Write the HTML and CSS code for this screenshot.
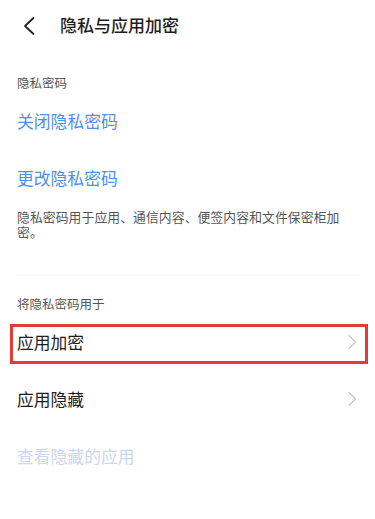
FILE: index.html
```html
<!DOCTYPE html>
<html lang="zh-CN">
<head>
<meta charset="UTF-8">
<meta name="viewport" content="width=device-width, initial-scale=1.0">
<title>隐私与应用加密</title>
<link rel="stylesheet" href="styles.css">
</head>
<body>
<div class="page">
    <div class="header">
        <svg class="back" width="14" height="20" viewBox="0 0 14 20">
            <path d="M11.5 2 L3 10 L11.5 18" fill="none" stroke="#222" stroke-width="1.8" stroke-linecap="round" stroke-linejoin="round"/>
        </svg>
        <div class="header-title">隐私与应用加密</div>
    </div>

    <div class="group-title first">隐私密码</div>
    <div class="row link">关闭隐私密码</div>
    <div class="row link">更改隐私密码</div>
    <div class="desc">隐私密码用于应用、通信内容、便签内容和文件保密柜加密。</div>
    <div class="divider"></div>

    <div class="group-title">将隐私密码用于</div>
    <div class="row item marked">
        <span>应用加密</span>
        <svg class="chevron" width="10" height="16" viewBox="0 0 10 16"><path d="M2 1.5 L8.5 8 L2 14.5" fill="none" stroke="#c9c9c9" stroke-width="1.4" stroke-linecap="round" stroke-linejoin="round"/></svg>
        <div class="mark"></div>
    </div>
    <div class="row item">
        <span>应用隐藏</span>
        <svg class="chevron" width="10" height="16" viewBox="0 0 10 16"><path d="M2 1.5 L8.5 8 L2 14.5" fill="none" stroke="#c9c9c9" stroke-width="1.4" stroke-linecap="round" stroke-linejoin="round"/></svg>
    </div>
    <div class="row disabled">查看隐藏的应用</div>
</div>
</body>
</html>
```

FILE: styles.css
```css
body {
    margin: 0;
    padding: 0;
    background-color: #fff;
    font-family: "Noto Sans CJK SC", "Noto Sans", sans-serif;
    color: #222;
}
.page {
    width: 375px;
}
.header {
    height: 48px;
    display: flex;
    align-items: center;
}
.back {
    margin-left: 22px;
    margin-top: 4px;
}
.header-title {
    margin-left: 24px;
    font-size: 17px;
    font-weight: 500;
    color: #1e1e1e;
}
.group-title {
    padding: 19px 17px 0;
    font-size: 12.5px;
    line-height: 18px;
    color: #555;
}
.group-title.first {
    padding-top: 26px;
}
.row {
    height: 57px;
    padding: 0 18px 0 17px;
    display: flex;
    align-items: center;
    justify-content: space-between;
    font-size: 16.8px;
}
.link {
    color: #4f8fe6;
}
.item {
    color: #1c1c1c;
}
.disabled {
    color: #cdd6f1;
}
.marked {
    position: relative;
}
.mark {
    position: absolute;
    left: 10px;
    right: 7px;
    top: 11px;
    bottom: 6px;
    border: 3px solid #e53a3a;
}
.desc {
    padding: 3px 30px 0 17px;
    font-size: 12.8px;
    line-height: 15px;
    letter-spacing: 0.1px;
    color: #555;
}
.divider {
    height: 1px;
    margin: 36px 15px 0 17px;
    background-color: #f8f8f8;
}
```
